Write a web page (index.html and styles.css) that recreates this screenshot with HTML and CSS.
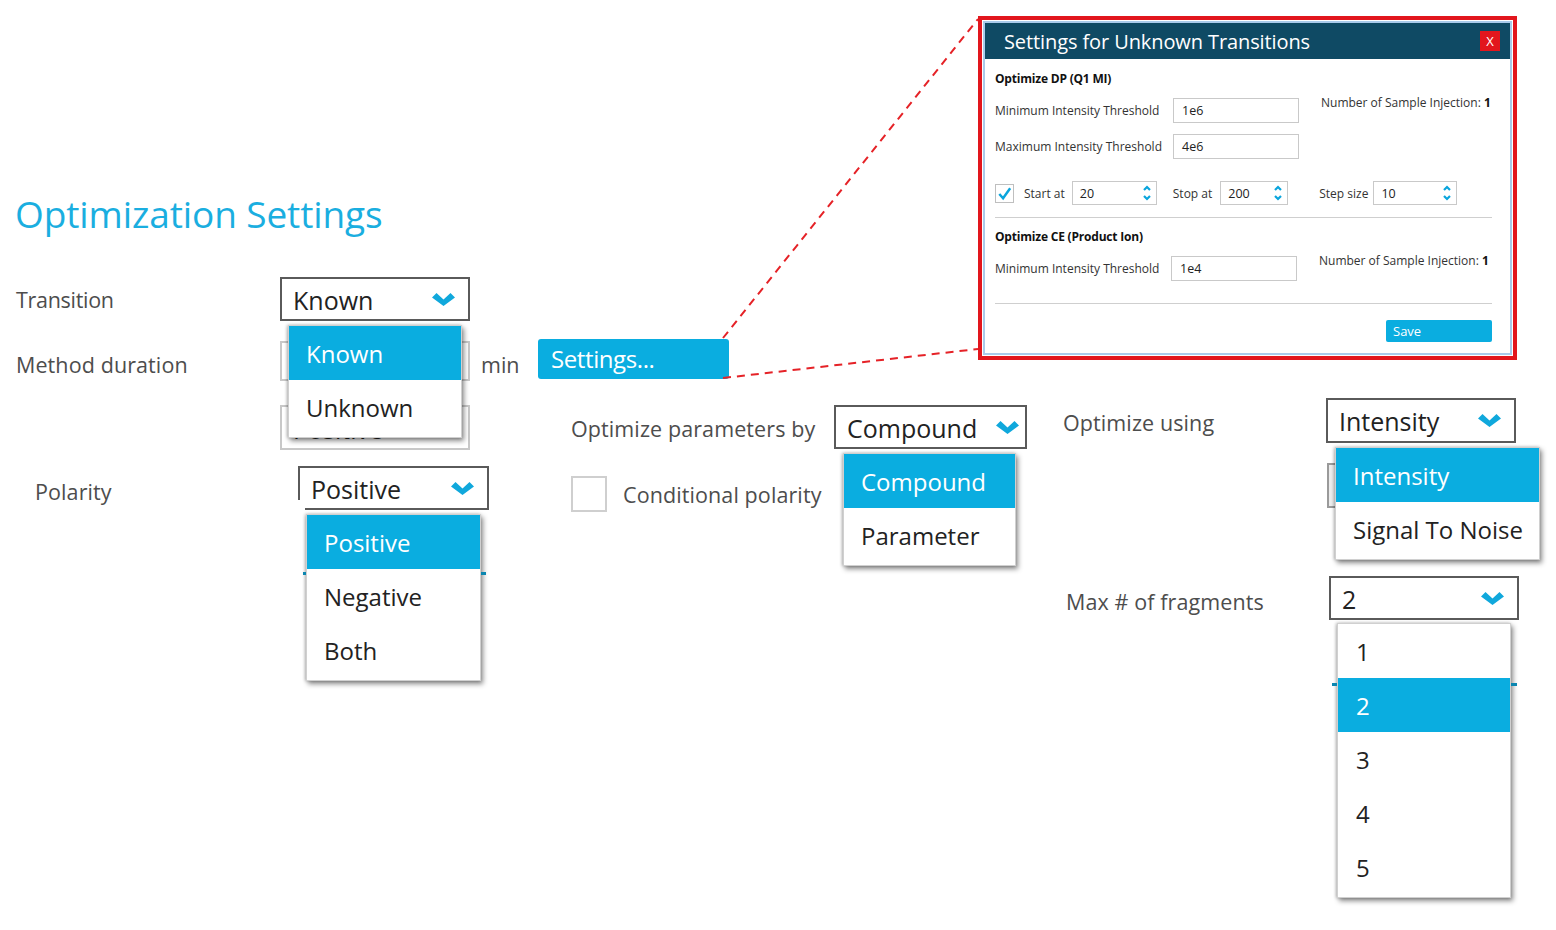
FILE: index.html
```html
<!DOCTYPE html>
<html lang="en">
<head>
<meta charset="utf-8">
<title>Optimization Settings</title>
<link rel="stylesheet" href="styles.css">
</head>
<body>
<div class="canvas">

  <h1 class="page-title">Optimization Settings</h1>

  <!-- Transition -->
  <div class="field at-transition">
    <span class="label">Transition</span>
    <div class="select w190"><span>Known</span><svg class="chev" viewBox="0 0 23 13"><polygon points="0,4.5 4.5,0 11.5,6.5 18.5,0 23,4.5 11.5,13"/></svg></div>
  </div>

  <!-- Method duration -->
  <div class="field at-duration">
    <span class="label lower">Method duration</span>
    <div class="textbox"></div>
    <span class="unit">min</span>
  </div>

  <!-- Polarity box hidden under the transition menu -->
  <div class="select ghost at-ghost"><span>Positive</span></div>

  <button class="btn-settings at-settings" type="button">Settings...</button>

  <!-- Polarity -->
  <div class="field at-polarity">
    <span class="label lower">Polarity</span>
    <div class="select w191 cut"><span>Positive</span><svg class="chev" viewBox="0 0 23 13"><polygon points="0,4.5 4.5,0 11.5,6.5 18.5,0 23,4.5 11.5,13"/></svg></div>
  </div>

  <!-- Optimize parameters by -->
  <div class="field at-params">
    <span class="label">Optimize parameters by</span>
    <div class="select w193 tight"><span>Compound</span><svg class="chev" viewBox="0 0 23 13"><polygon points="0,4.5 4.5,0 11.5,6.5 18.5,0 23,4.5 11.5,13"/></svg></div>
  </div>

  <label class="check at-cond">
    <span class="box"></span>
    <span class="label">Conditional polarity</span>
  </label>

  <!-- Optimize using -->
  <div class="field at-using">
    <span class="label">Optimize using</span>
    <div class="select w190 h45"><span>Intensity</span><svg class="chev" viewBox="0 0 23 13"><polygon points="0,4.5 4.5,0 11.5,6.5 18.5,0 23,4.5 11.5,13"/></svg></div>
  </div>
  <div class="stub at-stub"></div>

  <!-- Max # of fragments -->
  <div class="field at-frag">
    <span class="label lower">Max # of fragments</span>
    <div class="select w190"><span>2</span><svg class="chev" viewBox="0 0 23 13"><polygon points="0,4.5 4.5,0 11.5,6.5 18.5,0 23,4.5 11.5,13"/></svg></div>
  </div>

  <!-- Open drop-down menus -->
  <ul class="menu at-menu-transition">
    <li class="on">Known</li>
    <li>Unknown</li>
  </ul>

  <ul class="menu at-menu-polarity">
    <li class="on">Positive</li>
    <li>Negative</li>
    <li>Both</li>
  </ul>

  <ul class="menu at-menu-params">
    <li class="on">Compound</li>
    <li>Parameter</li>
  </ul>

  <ul class="menu at-menu-using">
    <li class="on">Intensity</li>
    <li>Signal To Noise</li>
  </ul>

  <ul class="menu at-menu-frag">
    <li>1</li>
    <li class="on">2</li>
    <li>3</li>
    <li>4</li>
    <li>5</li>
  </ul>

  <!-- Callout lines from the Settings button to the dialog -->
  <svg class="callout" width="1556" height="930" viewBox="0 0 1556 930">
    <line x1="723" y1="338" x2="978" y2="19"/>
    <line x1="723" y1="378" x2="978" y2="349"/>
  </svg>

  <!-- Settings dialog -->
  <div class="frame at-dialog">
    <div class="dialog">
      <div class="dlg-head">
        <span class="dlg-title">Settings for Unknown Transitions</span>
        <span class="dlg-close">X</span>
      </div>
      <div class="dlg-body">
        <div class="dlg-heading">Optimize DP (Q1 MI)</div>

        <div class="dlg-row r1">
          <span class="dlg-label">Minimum Intensity Threshold</span>
          <span class="dlg-input">1e6</span>
          <span class="dlg-note">Number of Sample Injection: <b>1</b></span>
        </div>

        <div class="dlg-row r2">
          <span class="dlg-label">Maximum Intensity Threshold</span>
          <span class="dlg-input">4e6</span>
        </div>

        <div class="dlg-row r3">
          <span class="dlg-check"><svg viewBox="0 0 18 18"><path d="M3.5 9.5 L7.5 14 L15 3.5"/></svg></span>
          <span class="dlg-small s-start">Start at</span>
          <span class="spin w85">20<svg class="arrows" viewBox="0 0 8 16"><path d="M1 5 L4 2 L7 5 M1 11 L4 14 L7 11"/></svg></span>
          <span class="dlg-small s-stop">Stop at</span>
          <span class="spin w68">200<svg class="arrows" viewBox="0 0 8 16"><path d="M1 5 L4 2 L7 5 M1 11 L4 14 L7 11"/></svg></span>
          <span class="dlg-small s-step">Step size</span>
          <span class="spin w84">10<svg class="arrows" viewBox="0 0 8 16"><path d="M1 5 L4 2 L7 5 M1 11 L4 14 L7 11"/></svg></span>
        </div>

        <div class="dlg-sep s1"></div>

        <div class="dlg-heading h2">Optimize CE (Product Ion)</div>

        <div class="dlg-row r4">
          <span class="dlg-label">Minimum Intensity Threshold</span>
          <span class="dlg-input">1e4</span>
          <span class="dlg-note">Number of Sample Injection: <b>1</b></span>
        </div>

        <div class="dlg-sep s2"></div>

        <div class="dlg-foot">
          <button class="btn-save" type="button">Save</button>
        </div>
      </div>
    </div>
  </div>

</div>
</body>
</html>
```

FILE: styles.css
```css
* { box-sizing: border-box; }

body {
  margin: 0;
  background: #ffffff;
  font-family: "Open Sans", "Noto Sans", sans-serif;
  color: #222;
}

.canvas {
  position: relative;
  width: 1556px;
  height: 930px;
  overflow: hidden;
  background: #ffffff;
}

/* ---------- page heading ---------- */
.page-title {
  position: absolute;
  left: 15px;
  top: 188px;
  margin: 0;
  font-size: 37px;
  font-weight: 400;
  color: #1aaee0;
  letter-spacing: -0.1px;
  white-space: nowrap;
}

/* ---------- form fields ---------- */
.field {
  position: absolute;
  display: flex;
  align-items: center;
}

.label {
  display: block;
  width: 264px;
  padding-top: 3px;
  font-size: 21.5px;
  color: #4d4d4d;
  letter-spacing: 0.1px;
  white-space: nowrap;
}
.label.lower { padding-top: 7px; }

.at-transition { left: 16px; top: 277px; }
.at-transition .label { letter-spacing: -0.3px; padding-top: 0; }
.at-duration   { left: 16px; top: 341px; height: 40px; }
.at-polarity   { left: 35px; top: 466px; }
.at-polarity .label { width: 263px; }
.at-params     { left: 571px; top: 405px; }
.at-params .label { width: 263px; }
.at-using      { left: 1063px; top: 398px; }
.at-using .label { width: 263px; }
.at-frag       { left: 1066px; top: 576px; }
.at-frag .label { width: 263px; }

.select {
  position: relative;
  height: 44px;
  display: flex;
  align-items: center;
  justify-content: space-between;
  padding: 0 13px 0 11px;
  border: 2px solid #5a5a5a;
  background: #fff;
  font-size: 25px;
  color: #222;
  white-space: nowrap;
}
.select > span { padding-top: 1px; }
.select.w190 { width: 190px; }
.select.w191 { width: 191px; }
.select.w193 { width: 193px; }
.select.h45 { height: 45px; }
.select.tight { padding-right: 6px; }

/* bottom-left corner of the polarity box is clipped */
.select.cut::after {
  content: "";
  position: absolute;
  left: -2px;
  bottom: -2px;
  width: 7px;
  height: 10px;
  background: #fff;
}

.chev {
  width: 23px;
  height: 13px;
  fill: #10a8dc;
  flex: none;
}

.textbox {
  width: 190px;
  height: 40px;
  border: 2px solid #c8c8c8;
  background: #fff;
}

.unit {
  margin-left: 11px;
  padding-top: 6px;
  font-size: 21.5px;
  color: #4d4d4d;
}

.ghost {
  position: absolute;
  width: 190px;
  height: 45px;
  border: 2px solid #c8c8c8;
  align-items: flex-end;
  padding-bottom: 2px;
}
.at-ghost { left: 280px; top: 405px; }

.stub {
  position: absolute;
  width: 190px;
  height: 45px;
  border: 2px solid #9a9a9a;
  background: #ececec;
}
.at-stub { left: 1327px; top: 463px; }

.btn-settings {
  position: absolute;
  width: 191px;
  height: 40px;
  padding: 0 0 2px 13px;
  border: 0;
  border-radius: 3px;
  background: #0aade0;
  color: #fff;
  font-family: inherit;
  font-size: 24px;
  text-align: left;
  letter-spacing: -0.4px;
}
.at-settings { left: 538px; top: 339px; }

.check {
  position: absolute;
  display: flex;
  align-items: center;
}
.check .box {
  width: 36px;
  height: 36px;
  border: 2px solid #cfcfcf;
  margin-right: 16px;
  background: #fff;
}
.check .label { width: auto; padding-top: 0; }
.at-cond { left: 571px; top: 476px; }

/* ---------- drop-down menus ---------- */
.menu {
  position: absolute;
  margin: 0;
  padding: 0 0 3px;
  list-style: none;
  background: #fff;
  border: 1px solid #d0d0d0;
  box-shadow: 2px 3px 5px rgba(0, 0, 0, 0.45), -1px 0 3px rgba(0, 0, 0, 0.25);
}
.menu li {
  height: 54px;
  display: flex;
  align-items: center;
  padding-left: 17px;
  font-size: 24px;
  color: #222;
  white-space: nowrap;
}
.menu li.on {
  background: #0aade0;
  color: #fff;
}

.at-menu-transition { left: 288px; top: 325px; width: 174px; }
.at-menu-polarity   { left: 306px; top: 514px; width: 175px; }
.at-menu-params     { left: 843px; top: 453px; width: 173px; }
.at-menu-using      { left: 1335px; top: 447px; width: 205px; }
.at-menu-frag       { left: 1337px; top: 623px; width: 174px; }

.at-menu-frag li { padding-left: 18px; }

/* highlight rule of the list underneath, peeking out at both sides */
.at-menu-polarity::before,
.at-menu-polarity::after,
.at-menu-frag::before,
.at-menu-frag::after {
  content: "";
  position: absolute;
  height: 3px;
  background: #0b86b0;
}
.at-menu-polarity::before { left: -4px; width: 3px; top: 57px; }
.at-menu-polarity::after  { right: -6px; width: 5px; top: 57px; }
.at-menu-frag::before { left: -6px; width: 5px; top: 59px; }
.at-menu-frag::after  { right: -7px; width: 6px; top: 59px; }

/* ---------- callout ---------- */
.callout {
  position: absolute;
  left: 0;
  top: 0;
  pointer-events: none;
}
.callout line {
  stroke: #e52227;
  stroke-width: 2;
  stroke-dasharray: 8 6;
}

/* ---------- settings dialog ---------- */
.frame {
  position: absolute;
  width: 539px;
  height: 344px;
  border: 4px solid #e2161d;
  padding: 1px;
  background: #fff;
}
.at-dialog { left: 978px; top: 16px; }

.dialog {
  height: 100%;
  border: 2px solid #a9cbeb;
  display: flex;
  flex-direction: column;
}

.dlg-head {
  height: 36px;
  flex: none;
  background: #0f4a64;
  display: flex;
  align-items: center;
  justify-content: space-between;
  padding: 0 10px 0 19px;
}
.dlg-title {
  color: #fff;
  font-size: 20px;
  letter-spacing: -0.1px;
}
.dlg-close {
  width: 20px;
  height: 20px;
  background: #e2161d;
  color: #fff;
  font-size: 13px;
  display: flex;
  align-items: center;
  justify-content: center;
}

.dlg-body {
  flex: 1;
  padding: 12px 18px 0 10px;
  font-size: 12px;
  color: #333;
  letter-spacing: 0;
}

.dlg-heading {
  height: 16px;
  line-height: 16px;
  font-weight: 700;
  color: #111;
  letter-spacing: -0.2px;
}
.dlg-heading.h2 { margin-top: 11px; }

.dlg-row {
  display: flex;
  align-items: center;
  height: 25px;
  margin-top: 11px;
}
.dlg-row.r3 { height: 24px; margin-top: 22px; }

.dlg-label { width: 178px; flex: none; white-space: nowrap; }
.r4 .dlg-label { width: 176px; }

.dlg-input {
  width: 126px;
  height: 25px;
  border: 1px solid #c9c9c9;
  padding-left: 8px;
  display: flex;
  align-items: center;
  font-size: 12.5px;
  color: #222;
}
.dlg-note {
  margin-left: 22px;
  align-self: flex-start;
  margin-top: -4px;
  white-space: nowrap;
}
.dlg-note b { color: #111; }

.dlg-check {
  width: 19px;
  height: 19px;
  border: 1px solid #bfbfbf;
  flex: none;
}
.dlg-check svg {
  width: 17px;
  height: 17px;
  fill: none;
  stroke: #0aa5dd;
  stroke-width: 2.6;
}

.dlg-small { white-space: nowrap; }
.s-start { margin: 0 7px 0 10px; }
.s-stop  { margin: 0 8px 0 16px; }
.s-step  { margin: 0 5px 0 31px; }

.spin {
  position: relative;
  height: 24px;
  border: 1px solid #c9c9c9;
  padding-left: 7px;
  display: flex;
  align-items: center;
  font-size: 12.5px;
  color: #222;
}
.spin.w85 { width: 85px; }
.spin.w68 { width: 68px; }
.spin.w84 { width: 84px; }
.spin .arrows {
  position: absolute;
  right: 5px;
  top: 3px;
  width: 8px;
  height: 16px;
  fill: none;
  stroke: #0aa5dd;
  stroke-width: 2.2;
}

.dlg-sep {
  height: 1px;
  background: #cfcfcf;
}
.dlg-sep.s1 { margin-top: 12px; }
.dlg-sep.s2 { margin-top: 22px; }

.dlg-foot {
  display: flex;
  justify-content: flex-end;
  margin-top: 16px;
}
.btn-save {
  width: 106px;
  height: 22px;
  border: 0;
  border-radius: 2px;
  background: #0aade0;
  color: #fff;
  font-family: inherit;
  font-size: 13px;
  text-align: left;
  padding: 0 0 0 7px;
}
```
